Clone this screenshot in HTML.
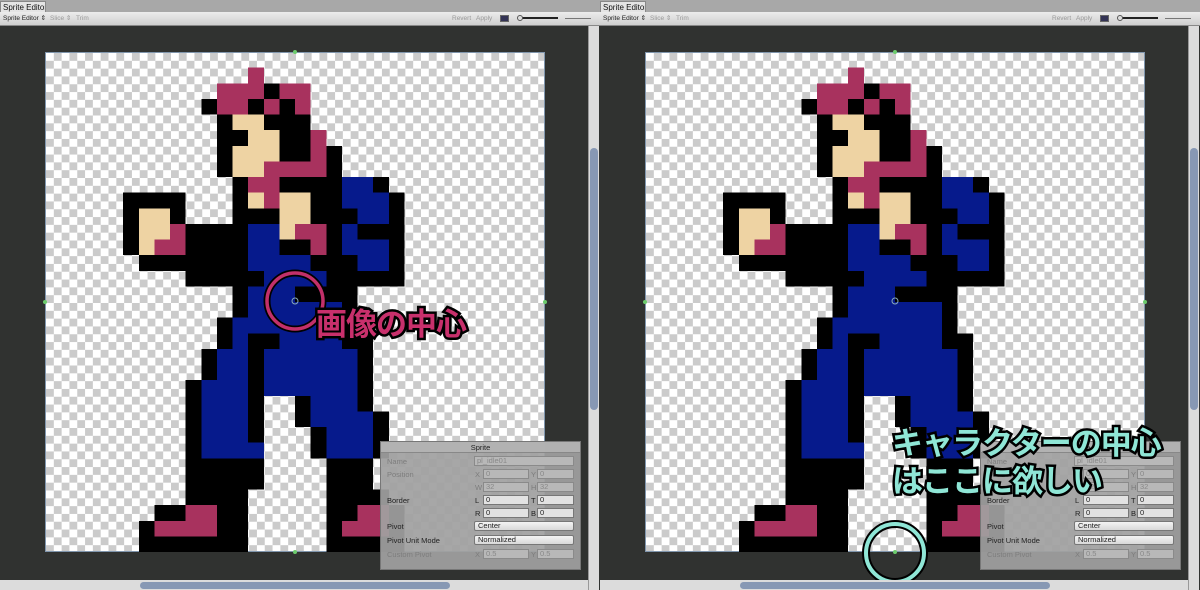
<!DOCTYPE html>
<html><head><meta charset="utf-8"><style>
*{margin:0;padding:0;box-sizing:border-box}
body{width:1200px;height:590px;overflow:hidden;background:#303230;font-family:"Liberation Sans","Noto Sans CJK JP",sans-serif;position:relative}
.pane{position:absolute;top:0;width:600px;height:590px;background:#303230;overflow:hidden}
.tb{position:absolute;left:0;top:0;width:600px;height:12px;background:#a8a8a8}
.tab{position:absolute;left:0;top:1px;width:46px;height:12px;background:#e4e4e4;border:1px solid #888;border-bottom:none;font-size:8px;line-height:11px;padding-left:2px;color:#111;white-space:nowrap;overflow:hidden}
.tool{position:absolute;left:0;top:12px;width:600px;height:14px;background:linear-gradient(#ececec,#cfcfcf);border-bottom:1px solid #888;font-size:6.5px;line-height:14px;color:#999;white-space:nowrap}
.tool span{position:absolute;top:0}
.chk{position:absolute;left:45px;top:52px;width:500px;height:500px;background-color:#fff;background-image:conic-gradient(#cbcbcb 25%,#fff 0 50%,#cbcbcb 0 75%,#fff 0);background-size:15.625px 15.625px;border:1px solid #8096ad}
.vs{position:absolute;left:588px;top:26px;width:11px;height:564px;background:#dcdcdc;border-left:1px solid #999}
.vt{position:absolute;left:590px;top:148px;width:8px;height:262px;background:#8798b4;border-radius:4px}
.hs{position:absolute;left:0;top:580px;width:588px;height:10px;background:#dcdcdc}
.ht{position:absolute;left:140px;top:582px;width:310px;height:7px;background:#8798b4;border-radius:4px}
.dot{position:absolute;width:4px;height:4px;background:#6ccc6c;border-radius:2px}
.ins{position:absolute;width:201px;height:129px;background:rgba(160,160,160,.93);border:1px solid #777;font-size:7.5px;color:#222}
.ins .t{position:absolute;left:0;top:0;width:100%;height:11px;text-align:center;line-height:11px;background:rgba(180,180,180,.9);border-bottom:1px solid #888}
.ins span{position:absolute}
.ins .f{position:absolute;height:10px;border:1px solid #8a8a8a;background:#b8b8b8;line-height:8px;padding-left:2px;color:#888}
.ins .f.on{background:#e2e2e2;color:#222;border-color:#777}
.ins .dd{position:absolute;height:10px;border:1px solid #777;border-radius:2px;background:linear-gradient(#f4f4f4,#d8d8d8);line-height:8px;padding-left:3px;color:#222}
.dim{color:#7d7d7d}
.k{fill:#000}.p{fill:#a8325e}.s{fill:#eed3a3}.b{fill:#061a8c}
</style></head><body>
<svg width="0" height="0" style="position:absolute"><defs><g id="spr" shape-rendering="crispEdges">
<rect class="p" x="13" y="1" width="1" height="1"/>
<rect class="p" x="11" y="2" width="3" height="1"/><rect class="k" x="14" y="2" width="1" height="1"/><rect class="p" x="15" y="2" width="2" height="1"/>
<rect class="k" x="10" y="3" width="1" height="1"/><rect class="p" x="11" y="3" width="2" height="1"/><rect class="k" x="13" y="3" width="1" height="1"/><rect class="p" x="14" y="3" width="1" height="1"/><rect class="k" x="15" y="3" width="1" height="1"/><rect class="p" x="16" y="3" width="1" height="1"/>
<rect class="k" x="11" y="4" width="1" height="1"/><rect class="s" x="12" y="4" width="2" height="1"/><rect class="k" x="14" y="4" width="3" height="1"/>
<rect class="k" x="11" y="5" width="2" height="1"/><rect class="s" x="13" y="5" width="2" height="1"/><rect class="k" x="15" y="5" width="2" height="1"/><rect class="p" x="17" y="5" width="1" height="1"/>
<rect class="k" x="11" y="6" width="1" height="1"/><rect class="s" x="12" y="6" width="3" height="1"/><rect class="k" x="15" y="6" width="2" height="1"/><rect class="p" x="17" y="6" width="1" height="1"/><rect class="k" x="18" y="6" width="1" height="1"/>
<rect class="k" x="11" y="7" width="1" height="1"/><rect class="s" x="12" y="7" width="2" height="1"/><rect class="p" x="14" y="7" width="4" height="1"/><rect class="k" x="18" y="7" width="1" height="1"/>
<rect class="k" x="12" y="8" width="1" height="1"/><rect class="p" x="13" y="8" width="2" height="1"/><rect class="k" x="15" y="8" width="4" height="1"/><rect class="b" x="19" y="8" width="2" height="1"/><rect class="k" x="21" y="8" width="1" height="1"/>
<rect class="k" x="5" y="9" width="4" height="1"/><rect class="k" x="12" y="9" width="1" height="1"/><rect class="s" x="13" y="9" width="1" height="1"/><rect class="p" x="14" y="9" width="1" height="1"/><rect class="s" x="15" y="9" width="2" height="1"/><rect class="k" x="17" y="9" width="2" height="1"/><rect class="b" x="19" y="9" width="3" height="1"/><rect class="k" x="22" y="9" width="1" height="1"/>
<rect class="k" x="5" y="10" width="1" height="1"/><rect class="s" x="6" y="10" width="2" height="1"/><rect class="k" x="8" y="10" width="1" height="1"/><rect class="k" x="12" y="10" width="3" height="1"/><rect class="s" x="15" y="10" width="2" height="1"/><rect class="k" x="17" y="10" width="3" height="1"/><rect class="b" x="20" y="10" width="2" height="1"/><rect class="k" x="22" y="10" width="1" height="1"/>
<rect class="k" x="5" y="11" width="1" height="1"/><rect class="s" x="6" y="11" width="2" height="1"/><rect class="p" x="8" y="11" width="1" height="1"/><rect class="k" x="9" y="11" width="4" height="1"/><rect class="b" x="13" y="11" width="2" height="1"/><rect class="s" x="15" y="11" width="1" height="1"/><rect class="p" x="16" y="11" width="2" height="1"/><rect class="k" x="18" y="11" width="1" height="1"/><rect class="b" x="19" y="11" width="1" height="1"/><rect class="k" x="20" y="11" width="3" height="1"/>
<rect class="k" x="5" y="12" width="1" height="1"/><rect class="s" x="6" y="12" width="1" height="1"/><rect class="p" x="7" y="12" width="2" height="1"/><rect class="k" x="9" y="12" width="4" height="1"/><rect class="b" x="13" y="12" width="2" height="1"/><rect class="k" x="15" y="12" width="2" height="1"/><rect class="p" x="17" y="12" width="1" height="1"/><rect class="k" x="18" y="12" width="1" height="1"/><rect class="b" x="19" y="12" width="3" height="1"/><rect class="k" x="22" y="12" width="1" height="1"/>
<rect class="k" x="6" y="13" width="7" height="1"/><rect class="b" x="13" y="13" width="4" height="1"/><rect class="k" x="17" y="13" width="3" height="1"/><rect class="b" x="20" y="13" width="2" height="1"/><rect class="k" x="22" y="13" width="1" height="1"/>
<rect class="k" x="9" y="14" width="5" height="1"/><rect class="b" x="14" y="14" width="4" height="1"/><rect class="k" x="18" y="14" width="5" height="1"/>
<rect class="k" x="12" y="15" width="1" height="1"/><rect class="b" x="13" y="15" width="3" height="1"/><rect class="k" x="16" y="15" width="4" height="1"/>
<rect class="k" x="12" y="16" width="1" height="1"/><rect class="b" x="13" y="16" width="6" height="1"/><rect class="k" x="19" y="16" width="1" height="1"/>
<rect class="k" x="11" y="17" width="1" height="1"/><rect class="b" x="12" y="17" width="7" height="1"/><rect class="k" x="19" y="17" width="1" height="1"/>
<rect class="k" x="11" y="18" width="1" height="1"/><rect class="b" x="12" y="18" width="1" height="1"/><rect class="k" x="13" y="18" width="2" height="1"/><rect class="b" x="15" y="18" width="4" height="1"/><rect class="k" x="19" y="18" width="2" height="1"/>
<rect class="k" x="10" y="19" width="1" height="2"/><rect class="b" x="11" y="19" width="2" height="2"/><rect class="k" x="13" y="19" width="1" height="2"/><rect class="b" x="14" y="19" width="6" height="2"/><rect class="k" x="20" y="19" width="1" height="2"/>
<rect class="k" x="9" y="21" width="1" height="1"/><rect class="b" x="10" y="21" width="3" height="1"/><rect class="k" x="13" y="21" width="1" height="1"/><rect class="b" x="14" y="21" width="6" height="1"/><rect class="k" x="20" y="21" width="1" height="1"/>
<rect class="k" x="9" y="22" width="1" height="4"/><rect class="b" x="10" y="22" width="3" height="4"/><rect class="k" x="13" y="22" width="1" height="3"/><rect class="b" x="13" y="25" width="1" height="1"/>
<rect class="k" x="16" y="22" width="1" height="2"/><rect class="b" x="17" y="22" width="3" height="1"/><rect class="k" x="20" y="22" width="1" height="1"/>
<rect class="b" x="17" y="23" width="4" height="1"/><rect class="k" x="21" y="23" width="1" height="3"/>
<rect class="k" x="17" y="24" width="1" height="2"/><rect class="b" x="18" y="24" width="3" height="2"/>
<rect class="k" x="9" y="26" width="5" height="2"/><rect class="k" x="18" y="26" width="3" height="2"/>
<rect class="k" x="9" y="28" width="4" height="1"/><rect class="k" x="18" y="28" width="4" height="1"/>
<rect class="k" x="7" y="29" width="2" height="1"/><rect class="p" x="9" y="29" width="2" height="1"/><rect class="k" x="11" y="29" width="2" height="2"/><rect class="k" x="18" y="29" width="2" height="1"/><rect class="p" x="20" y="29" width="2" height="1"/><rect class="k" x="22" y="29" width="1" height="2"/>
<rect class="k" x="6" y="30" width="1" height="1"/><rect class="p" x="7" y="30" width="4" height="1"/><rect class="k" x="18" y="30" width="1" height="1"/><rect class="p" x="19" y="30" width="3" height="1"/>
<rect class="k" x="6" y="31" width="7" height="1"/><rect class="k" x="18" y="31" width="5" height="1"/>
</g></defs></svg>

<!-- LEFT PANE -->
<div class="pane" style="left:0">
<div class="tb"></div><div class="tab">Sprite Editor</div>
<div class="tool"><span style="left:3px;color:#222">Sprite Editor ⇕</span><span style="left:50px">Slice ⇕</span><span style="left:76px">Trim</span>
<span style="left:452px">Revert</span><span style="left:476px">Apply</span>
<span style="left:500px;top:3px;width:9px;height:7px;background:#335;border:1px solid #666"></span>
<span style="left:518px;top:5px;width:40px;height:2px;background:#222"></span><span style="left:517px;top:3px;width:6px;height:6px;border-radius:3px;background:#ddd;border:1px solid #555"></span>
<span style="left:565px;top:6px;width:26px;height:1px;background:#777"></span></div>
<div class="chk"></div>
<svg style="position:absolute;left:45px;top:52px" width="500" height="500" viewBox="0 0 32 32"><use href="#spr"/></svg>
<div class="dot" style="left:293px;top:50px"></div><div class="dot" style="left:43px;top:300px"></div><div class="dot" style="left:543px;top:300px"></div><div class="dot" style="left:293px;top:550px"></div>
<svg style="position:absolute;left:0;top:0" width="600" height="590">
<circle cx="295" cy="301" r="28" fill="none" stroke="#000" stroke-width="7"/>
<circle cx="295" cy="301" r="28" fill="none" stroke="#c2306a" stroke-width="3.5"/>
<circle cx="295" cy="301" r="3" fill="none" stroke="#8ab" stroke-width="1"/>
</svg>
<div style="position:absolute;left:316px;top:302px;font-size:31px;font-weight:bold;color:#c8306c;-webkit-text-stroke:5px #000;paint-order:stroke fill;letter-spacing:-1px;font-family:'Noto Sans CJK JP',sans-serif;line-height:40px">画像の中心</div>
<div class="ins" style="left:380px;top:441px">
<div class="t">Sprite</div>
<span class="dim" style="left:6px;top:15px">Name</span><div class="f" style="left:93px;top:14px;width:100px">pl_idle01</div>
<span class="dim" style="left:6px;top:28px">Position</span><span class="dim" style="left:94px;top:28px">X</span><div class="f" style="left:102px;top:27px;width:46px">0</div><span class="dim" style="left:150px;top:28px">Y</span><div class="f" style="left:156px;top:27px;width:37px">0</div>
<span class="dim" style="left:94px;top:41px">W</span><div class="f" style="left:102px;top:40px;width:46px">32</div><span class="dim" style="left:150px;top:41px">H</span><div class="f" style="left:156px;top:40px;width:37px">32</div>
<span style="left:6px;top:54px">Border</span><span style="left:94px;top:54px">L</span><div class="f on" style="left:102px;top:53px;width:46px">0</div><span style="left:150px;top:54px">T</span><div class="f on" style="left:156px;top:53px;width:37px">0</div>
<span style="left:94px;top:67px">R</span><div class="f on" style="left:102px;top:66px;width:46px">0</div><span style="left:150px;top:67px">B</span><div class="f on" style="left:156px;top:66px;width:37px">0</div>
<span style="left:6px;top:80px">Pivot</span><div class="dd" style="left:93px;top:79px;width:100px">Center</div>
<span style="left:6px;top:94px">Pivot Unit Mode</span><div class="dd" style="left:93px;top:93px;width:100px">Normalized</div>
<span class="dim" style="left:6px;top:108px">Custom Pivot</span><span class="dim" style="left:94px;top:108px">X</span><div class="f" style="left:102px;top:107px;width:46px">0.5</div><span class="dim" style="left:150px;top:108px">Y</span><div class="f" style="left:156px;top:107px;width:37px">0.5</div>
</div>
<div class="vs"></div><div class="vt"></div><div class="hs"></div><div class="ht"></div>
</div>

<!-- RIGHT PANE -->
<div class="pane" style="left:600px">
<div class="tb"></div><div class="tab">Sprite Editor</div>
<div class="tool"><span style="left:3px;color:#222">Sprite Editor ⇕</span><span style="left:50px">Slice ⇕</span><span style="left:76px">Trim</span>
<span style="left:452px">Revert</span><span style="left:476px">Apply</span>
<span style="left:500px;top:3px;width:9px;height:7px;background:#335;border:1px solid #666"></span>
<span style="left:518px;top:5px;width:40px;height:2px;background:#222"></span><span style="left:517px;top:3px;width:6px;height:6px;border-radius:3px;background:#ddd;border:1px solid #555"></span>
<span style="left:565px;top:6px;width:26px;height:1px;background:#777"></span></div>
<div class="chk"></div>
<svg style="position:absolute;left:45px;top:52px" width="500" height="500" viewBox="0 0 32 32"><use href="#spr"/></svg>
<div class="dot" style="left:293px;top:50px"></div><div class="dot" style="left:43px;top:300px"></div><div class="dot" style="left:543px;top:300px"></div><div class="dot" style="left:293px;top:550px"></div>
<svg style="position:absolute;left:0;top:0" width="600" height="590"><circle cx="295" cy="301" r="3" fill="none" stroke="#8ab" stroke-width="1"/></svg>
<div class="ins" style="left:380px;top:441px">
<div class="t">Sprite</div>
<span class="dim" style="left:6px;top:15px">Name</span><div class="f" style="left:93px;top:14px;width:100px">pl_idle01</div>
<span class="dim" style="left:6px;top:28px">Position</span><span class="dim" style="left:94px;top:28px">X</span><div class="f" style="left:102px;top:27px;width:46px">0</div><span class="dim" style="left:150px;top:28px">Y</span><div class="f" style="left:156px;top:27px;width:37px">0</div>
<span class="dim" style="left:94px;top:41px">W</span><div class="f" style="left:102px;top:40px;width:46px">32</div><span class="dim" style="left:150px;top:41px">H</span><div class="f" style="left:156px;top:40px;width:37px">32</div>
<span style="left:6px;top:54px">Border</span><span style="left:94px;top:54px">L</span><div class="f on" style="left:102px;top:53px;width:46px">0</div><span style="left:150px;top:54px">T</span><div class="f on" style="left:156px;top:53px;width:37px">0</div>
<span style="left:94px;top:67px">R</span><div class="f on" style="left:102px;top:66px;width:46px">0</div><span style="left:150px;top:67px">B</span><div class="f on" style="left:156px;top:66px;width:37px">0</div>
<span style="left:6px;top:80px">Pivot</span><div class="dd" style="left:93px;top:79px;width:100px">Center</div>
<span style="left:6px;top:94px">Pivot Unit Mode</span><div class="dd" style="left:93px;top:93px;width:100px">Normalized</div>
<span class="dim" style="left:6px;top:108px">Custom Pivot</span><span class="dim" style="left:94px;top:108px">X</span><div class="f" style="left:102px;top:107px;width:46px">0.5</div><span class="dim" style="left:150px;top:108px">Y</span><div class="f" style="left:156px;top:107px;width:37px">0.5</div>
</div>
<svg style="position:absolute;left:0;top:0" width="600" height="590">
<circle cx="295" cy="553" r="29" fill="none" stroke="#000" stroke-width="8"/>
<circle cx="295" cy="553" r="29" fill="none" stroke="#8fe6d6" stroke-width="4"/>
</svg>
<div style="position:absolute;left:292px;top:422px;font-size:31px;font-weight:bold;color:#8fe6d6;-webkit-text-stroke:5px #000;paint-order:stroke fill;letter-spacing:-1px;font-family:'Noto Sans CJK JP',sans-serif;line-height:38px;white-space:nowrap">キャラクターの中心<br>はここに欲しい</div>
<div class="vs"></div><div class="vt"></div><div class="hs"></div><div class="ht"></div>
</div>
</body></html>
